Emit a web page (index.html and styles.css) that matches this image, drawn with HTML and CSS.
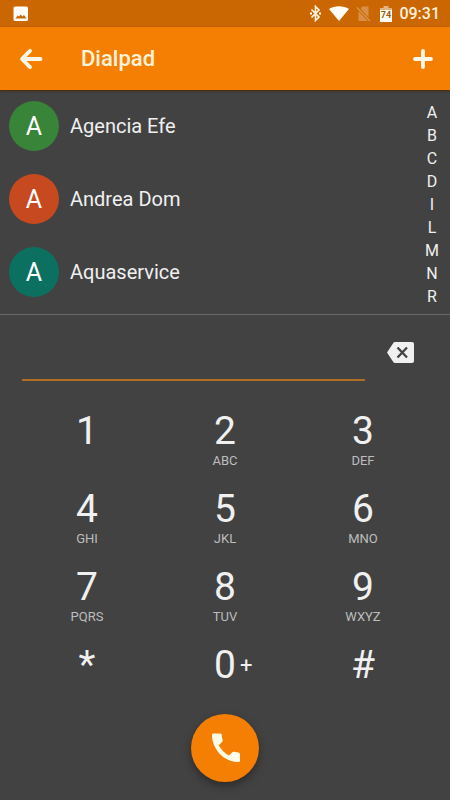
FILE: index.html
```html
<!DOCTYPE html>
<html lang="en">
<head>
<meta charset="utf-8">
<meta name="viewport" content="width=device-width, initial-scale=1">
<title>Dialpad</title>
<link rel="stylesheet" href="styles.css">
</head>
<body>
<div class="status">
  <svg class="status-photo" width="16" height="16" viewBox="0 0 16 16" aria-hidden="true"><path fill="#fffdf5" fill-rule="evenodd" d="M2 .5h11.500a1.500 1.500 0 0 1 1.500 1.500v11.500a1.500 1.500 0 0 1-1.500 1.500H2A1.500 1.500 0 0 1 .5 13.500V2A1.500 1.500 0 0 1 2 .5zM2.500 12.500h11L11 9 9.500 10.500 7.500 8.500 6 10.500 4.500 9.500z"/></svg>
  <div class="status-right">
    <svg width="11" height="17" viewBox="0 0 11 17" aria-hidden="true"><path d="M1.500 4.500l7.500 7.500-3.500 3.500v-14L9 5l-7.500 7.500" fill="none" stroke="#fff8ea" stroke-width="1.600"/><path d="M0 7.500h2v2H0zM9 7.500h2v2H9z" fill="#fff8ea"/></svg>
    <svg class="wifi" width="20" height="15" viewBox="0 0 20 15" aria-hidden="true"><path fill="#fffdf5" d="M10 15L0 3C5.500-.8 14.500-.8 20 3z"/></svg>
    <svg class="sim" width="15" height="16" viewBox="0 0 15 16" aria-hidden="true"><path fill="#d98f48" d="M6 .5h6.500v11.500L4.800 2.800zM2.500 5v10H12z"/><path d="M1 1.500l13 13.500" stroke="#ca6702" stroke-width="3"/><path d="M1 1.500l13 13.500" stroke="#dc9850" stroke-width="1.200"/></svg>
    <svg class="battery" width="12" height="16" viewBox="0 0 12 16" aria-hidden="true"><path fill="#e5b27f" d="M3.500 0h5v2H12v2H0V2h3.500z"/><path fill="#fffdf5" d="M0 4h12v12H0z"/><text class="battery-text" x="6" y="12" text-anchor="middle">74</text></svg>
    <span class="time">09:31</span>
  </div>
</div>
<header class="appbar">
  <button class="icon-btn" type="button" aria-label="Back"><svg width="24" height="22" viewBox="0 0 24 22"><path d="M11 2.800L3 11l8 8.200M3.500 11h18" fill="none" stroke="#fff8e8" stroke-width="3.800" stroke-linecap="round" stroke-linejoin="round"/></svg></button>
  <h1 class="title">Dialpad</h1>
  <button class="icon-btn" type="button" aria-label="Add contact"><svg width="20" height="20" viewBox="0 0 20 20"><path d="M10 2v16M2 10h16" stroke="#fff8e8" stroke-width="3.800" stroke-linecap="round"/></svg></button>
</header>
<main>
  <section class="contacts">
    <ul class="list">
      <li class="contact"><span class="avatar green">A</span><span>Agencia Efe</span></li>
      <li class="contact"><span class="avatar red">A</span><span>Andrea Dom</span></li>
      <li class="contact"><span class="avatar teal">A</span><span>Aquaservice</span></li>
    </ul>
    <nav class="index" aria-label="Alphabet">
      <a href="#">A</a><a href="#">B</a><a href="#">C</a><a href="#">D</a><a href="#">I</a><a href="#">L</a><a href="#">M</a><a href="#">N</a><a href="#">R</a>
    </nav>
  </section>
  <section class="dialer">
    <div class="entry">
      <input class="number" type="tel" aria-label="Phone number">
      <button class="erase" type="button" aria-label="Delete"><svg width="27" height="21" viewBox="0 0 27 21"><path fill="#f0f0f0" d="M8 0h17a2 2 0 0 1 2 2v17a2 2 0 0 1-2 2H8a2 2 0 0 1-1.700-1L0 10.500 6.300 1A2 2 0 0 1 8 0z"/><path d="M10.500 5.500l9.500 10M20 5.500l-9.500 10" stroke="#424242" stroke-width="2.300"/></svg></button>
    </div>
    <div class="keys">
      <button class="key" type="button"><span class="digit">1</span></button>
      <button class="key" type="button"><span class="digit">2</span><span class="letters">ABC</span></button>
      <button class="key" type="button"><span class="digit">3</span><span class="letters">DEF</span></button>
      <button class="key" type="button"><span class="digit">4</span><span class="letters">GHI</span></button>
      <button class="key" type="button"><span class="digit">5</span><span class="letters">JKL</span></button>
      <button class="key" type="button"><span class="digit">6</span><span class="letters">MNO</span></button>
      <button class="key" type="button"><span class="digit">7</span><span class="letters">PQRS</span></button>
      <button class="key" type="button"><span class="digit">8</span><span class="letters">TUV</span></button>
      <button class="key" type="button"><span class="digit">9</span><span class="letters">WXYZ</span></button>
      <button class="key" type="button"><span class="digit">*</span></button>
      <button class="key zero" type="button"><span class="digit">0</span><span class="plus">+</span></button>
      <button class="key" type="button"><span class="digit">#</span></button>
    </div>
    <button class="call" type="button" aria-label="Call"><svg width="29" height="32" viewBox="0 0 30 34" preserveAspectRatio="none"><path fill="#fffbe8" d="M2.500 1.500h7q1.500 0 1.600 1.500.1 3 .9 5.500.4 1.200-.5 2.100L8 14.200c2.400 4.700 5.800 8.300 10.500 10.800l3.500-3.500q.9-.9 2.100-.5 2.400.8 4.400.9 1.500.1 1.500 1.600v7q0 1.500-1.500 1.500C13 32 1 18 1 3q0-1.500 1.500-1.500z"/></svg></button>
  </section>
</main>
</body>
</html>
```
FILE: styles.css
```css
* { box-sizing: border-box; }
body {
  margin: 0;
  min-height: 100vh;
  background: #424242;
  color: #f0f0f0;
  font-family: Roboto, "Liberation Sans", sans-serif;
}
button {
  border: 0;
  padding: 0;
  background: none;
  color: inherit;
  font: inherit;
}
svg { display: block; }
.status {
  display: flex;
  align-items: center;
  justify-content: space-between;
  height: 27px;
  padding: 0 10px 0 13px;
  background: #ca6702;
}
.status-right { display: flex; align-items: center; }
.wifi { margin-left: 8px; }
.sim { margin-left: 7px; }
.battery { margin-left: 9px; }
.battery-text { font-size: 9px; font-weight: 700; fill: #9a5a18; }
.time {
  margin-left: 7px;
  font-size: 16px;
  font-weight: 500;
  color: #fff0dc;
}
.appbar {
  position: relative;
  display: flex;
  align-items: center;
  height: 63px;
  padding: 0 12px 0 16px;
  background: #f57f02;
  box-shadow: 0 1px 2px #4a2800;
}
.icon-btn {
  display: grid;
  place-items: center;
  width: 30px;
  height: 40px;
}
.title {
  flex: 1;
  margin: 0;
  padding-left: 35px;
  font-size: 22px;
  line-height: 28px;
  font-weight: 500;
  color: #fff3dc;
}
.contacts {
  display: flex;
  justify-content: space-between;
  padding-bottom: 6px;
  border-bottom: 1px solid #6a6a6a;
}
.list {
  display: grid;
  gap: 1px;
  margin: 0;
  padding: 0;
  list-style: none;
}
.contact {
  display: flex;
  align-items: center;
  gap: 11px;
  padding: 11px 9px;
  font-size: 20px;
}
.avatar {
  display: grid;
  place-items: center;
  width: 50px;
  height: 50px;
  border-radius: 50%;
  font-size: 25px;
  color: #fff;
}
.green { background: #388438; }
.red { background: #c74920; }
.teal { background: #0c7060; }
.index {
  display: flex;
  flex-direction: column;
  width: 36px;
  padding-top: 11px;
  text-align: center;
}
.index a {
  font-size: 16px;
  line-height: 23px;
  color: inherit;
  text-decoration: none;
}
.dialer { padding: 0 18px; }
.entry {
  display: flex;
  align-items: center;
  gap: 22px;
  padding: 9px 18px 0 4px;
}
.number {
  flex: 1;
  min-width: 0;
  height: 57px;
  border: 0;
  border-bottom: 2px solid #b06c20;
  background: none;
  color: inherit;
  font: 28px Roboto, sans-serif;
  outline: none;
}
.keys {
  display: grid;
  grid-template-columns: repeat(3, 1fr);
  grid-auto-rows: 60px;
  gap: 18px 0;
  padding-top: 28px;
}
.key {
  display: flex;
  flex-direction: column;
  align-items: center;
}
.digit { font-size: 39px; line-height: 44px; }
.letters { font-size: 13px; line-height: 15px; color: #bdbdbd; }
.zero {
  display: grid;
  grid-template-columns: 1fr auto 1fr;
  align-items: start;
}
.zero .digit { grid-column: 2; }
.plus {
  padding-left: 4px;
  font-size: 22px;
  line-height: 46px;
  text-align: left;
}
.call {
  display: grid;
  place-items: center;
  width: 68px;
  height: 68px;
  margin: 11px auto 0;
  border-radius: 50%;
  background: #f57f02;
  box-shadow: 0 4px 8px rgba(0, 0, 0, 0.35);
}
```
